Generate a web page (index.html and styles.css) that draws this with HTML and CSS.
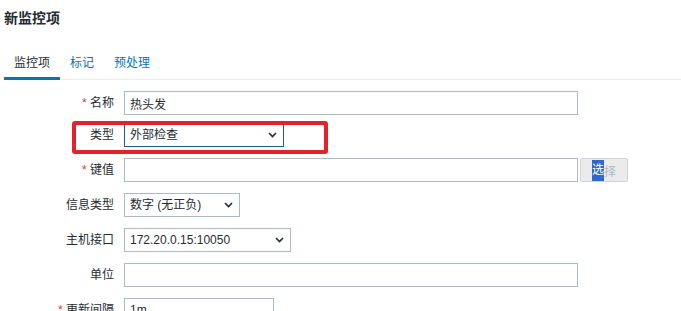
FILE: index.html
```html
<!DOCTYPE html>
<html lang="zh-CN">
<head>
    <meta charset="UTF-8">
    <title>新监控项</title>
    <link rel="stylesheet" href="styles.css">
</head>
<body>
    <h1 class="page-title">新监控项</h1>

    <ul class="tabs">
        <li class="tab active">监控项</li>
        <li class="tab"><a href="#">标记</a></li>
        <li class="tab"><a href="#">预处理</a></li>
    </ul>

    <form class="form-list">
        <div class="form-row first">
            <label class="form-label required">名称</label>
            <div class="form-field">
                <input class="text-input wide" type="text" value="热头发">
            </div>
        </div>

        <div class="form-row marked">
            <label class="form-label">类型</label>
            <div class="form-field">
                <div class="select focused type-select">
                    <span>外部检查</span>
                    <svg class="chevron" width="9" height="6" viewBox="0 0 9 6"><polyline points="1,1 4.5,4.5 8,1" fill="none" stroke="#1f2c33" stroke-width="1.6"/></svg>
                </div>
            </div>
            <div class="annotation"></div>
        </div>

        <div class="form-row">
            <label class="form-label required">键值</label>
            <div class="form-field">
                <input class="text-input wide" type="text">
                <button class="btn-alt" type="button"><span class="selection">选</span>择</button>
            </div>
        </div>

        <div class="form-row">
            <label class="form-label">信息类型</label>
            <div class="form-field">
                <div class="select value-select">
                    <span>数字 (无正负)</span>
                    <svg class="chevron" width="9" height="6" viewBox="0 0 9 6"><polyline points="1,1 4.5,4.5 8,1" fill="none" stroke="#1f2c33" stroke-width="1.6"/></svg>
                </div>
            </div>
        </div>

        <div class="form-row">
            <label class="form-label">主机接口</label>
            <div class="form-field">
                <div class="select iface-select">
                    <span>172.20.0.15:10050</span>
                    <svg class="chevron" width="9" height="6" viewBox="0 0 9 6"><polyline points="1,1 4.5,4.5 8,1" fill="none" stroke="#1f2c33" stroke-width="1.6"/></svg>
                </div>
            </div>
        </div>

        <div class="form-row">
            <label class="form-label">单位</label>
            <div class="form-field">
                <input class="text-input wide" type="text">
            </div>
        </div>

        <div class="form-row">
            <label class="form-label required">更新间隔</label>
            <div class="form-field">
                <input class="text-input short" type="text" value="1m">
            </div>
        </div>
    </form>
</body>
</html>
```

FILE: styles.css
```css
* {
    margin: 0;
    padding: 0;
    box-sizing: border-box;
    font-family: "Liberation Sans", "Noto Sans CJK SC", sans-serif;
}

body {
    background: #fff;
    color: #1f2c33;
    font-size: 12px;
    width: 681px;
    height: 311px;
    overflow: hidden;
}

.page-title {
    font-size: 14px;
    font-weight: bold;
    line-height: 18px;
    padding: 9px 4px 0;
    color: #1f2c33;
}

.tabs {
    list-style: none;
    display: flex;
    margin: 22px 0 0 4px;
    border-bottom: 1px solid #ebeef0;
}

.tab {
    padding: 6px 10px 6px;
    line-height: 16px;
    border-bottom: 3px solid transparent;
    margin-bottom: -1px;
}

.tab a {
    color: #0275b8;
    text-decoration: none;
}

.tab.active {
    border-bottom-color: #0275b8;
    color: #1f2c33;
}

.form-list {
    display: flex;
    flex-direction: column;
    gap: 11px;
    padding-top: 11px;
}

.form-row {
    position: relative;
    display: flex;
    align-items: center;
}

.form-row.first {
    margin-bottom: -3px;
}

.form-label {
    width: 114px;
    text-align: right;
    padding-right: 0;
    margin-right: 10px;
    line-height: 16px;
}

.form-label.required::before {
    content: "* ";
    color: #e33734;
}

.form-field {
    display: flex;
    align-items: center;
}

.text-input {
    height: 24px;
    border: 1px solid #acbbc2;
    background: #fff;
    padding: 0 5px;
    font-size: 12px;
    color: #1f2c33;
    outline: none;
}

.text-input.wide {
    width: 454px;
}

.text-input.short {
    width: 150px;
}

.select {
    height: 24px;
    border: 1px solid #acbbc2;
    background: #fff;
    padding: 0 6px 0 5px;
    display: flex;
    align-items: center;
    justify-content: space-between;
    line-height: 16px;
}

.select.focused {
    border-color: #1d5f94;
}

.type-select {
    width: 160px;
}

.value-select {
    width: 116px;
}

.iface-select {
    width: 167px;
}

.chevron {
    display: block;
}

.btn-alt {
    margin-left: 2px;
    width: 48px;
    height: 24px;
    background: #ebebeb;
    border: 1px solid #ccd5d9;
    border-radius: 2px;
    color: #acbbc2;
    font-size: 12px;
    display: flex;
    align-items: center;
    justify-content: center;
}

.btn-alt .selection {
    display: inline-block;
    height: 21px;
    line-height: 21px;
    background: #2f67d3;
    color: #fff;
}

.annotation {
    position: absolute;
    left: 72px;
    top: -2px;
    width: 256px;
    height: 33px;
    border: 4px solid #e5222c;
    border-radius: 3px;
    pointer-events: none;
}
```
